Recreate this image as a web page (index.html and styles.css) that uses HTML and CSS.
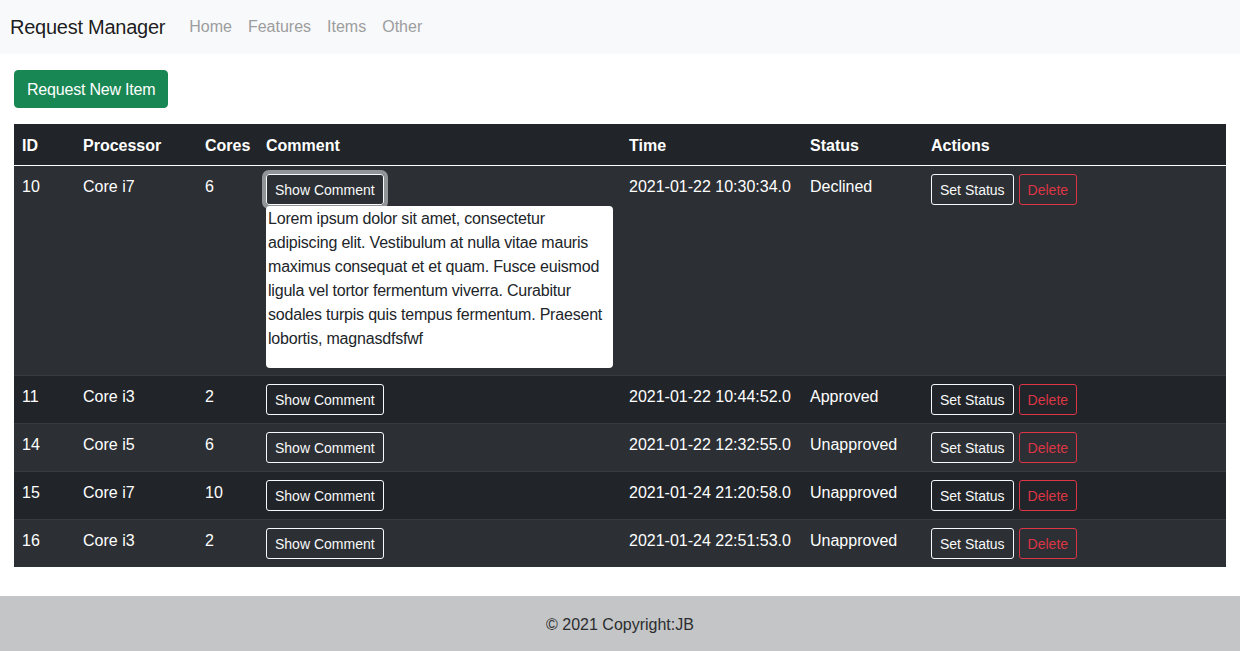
FILE: index.html
```html
<!DOCTYPE html>
<html lang="en">
<head>
<meta charset="utf-8">
<title>Request Manager</title>
<link rel="stylesheet" href="styles.css">
</head>
<body>
<nav class="navbar">
  <a class="brand" href="#">Request Manager</a>
  <ul class="nav">
    <li><a class="nav-link" href="#">Home</a></li>
    <li><a class="nav-link" href="#">Features</a></li>
    <li><a class="nav-link" href="#">Items</a></li>
    <li><a class="nav-link" href="#">Other</a></li>
  </ul>
</nav>
<main class="content">
  <button class="btn btn-success">Request New Item</button>
  <table class="table">
    <colgroup>
      <col class="c-id"><col class="c-proc"><col class="c-cores"><col class="c-comment"><col class="c-time"><col class="c-status"><col>
    </colgroup>
    <thead>
      <tr><th>ID</th><th>Processor</th><th>Cores</th><th>Comment</th><th>Time</th><th>Status</th><th>Actions</th></tr>
    </thead>
    <tbody>
      <tr class="odd">
        <td>10</td><td>Core i7</td><td>6</td>
        <td><button class="btn btn-sm btn-outline-light focus">Show Comment</button>
          <div class="comment-box"><p>Lorem ipsum dolor sit amet, consectetur adipiscing elit. Vestibulum at nulla vitae mauris maximus consequat et et quam. Fusce euismod ligula vel tortor fermentum viverra. Curabitur sodales turpis quis tempus fermentum. Praesent lobortis, magnasdfsfwf</p></div>
        </td>
        <td>2021-01-22 10:30:34.0</td><td>Declined</td>
        <td class="actions"><button class="btn btn-sm btn-outline-light">Set Status</button><button class="btn btn-sm btn-outline-danger">Delete</button></td>
      </tr>
      <tr>
        <td>11</td><td>Core i3</td><td>2</td>
        <td><button class="btn btn-sm btn-outline-light">Show Comment</button></td>
        <td>2021-01-22 10:44:52.0</td><td>Approved</td>
        <td class="actions"><button class="btn btn-sm btn-outline-light">Set Status</button><button class="btn btn-sm btn-outline-danger">Delete</button></td>
      </tr>
      <tr class="odd">
        <td>14</td><td>Core i5</td><td>6</td>
        <td><button class="btn btn-sm btn-outline-light">Show Comment</button></td>
        <td>2021-01-22 12:32:55.0</td><td>Unapproved</td>
        <td class="actions"><button class="btn btn-sm btn-outline-light">Set Status</button><button class="btn btn-sm btn-outline-danger">Delete</button></td>
      </tr>
      <tr>
        <td>15</td><td>Core i7</td><td>10</td>
        <td><button class="btn btn-sm btn-outline-light">Show Comment</button></td>
        <td>2021-01-24 21:20:58.0</td><td>Unapproved</td>
        <td class="actions"><button class="btn btn-sm btn-outline-light">Set Status</button><button class="btn btn-sm btn-outline-danger">Delete</button></td>
      </tr>
      <tr class="odd">
        <td>16</td><td>Core i3</td><td>2</td>
        <td><button class="btn btn-sm btn-outline-light">Show Comment</button></td>
        <td>2021-01-24 22:51:53.0</td><td>Unapproved</td>
        <td class="actions"><button class="btn btn-sm btn-outline-light">Set Status</button><button class="btn btn-sm btn-outline-danger">Delete</button></td>
      </tr>
    </tbody>
  </table>
</main>
<footer class="footer">© 2021 Copyright:JB</footer>
</body>
</html>
```
FILE: styles.css
```css
* { box-sizing: border-box; }
html, body { margin: 0; }
body {
  font-family: "Liberation Sans", Arial, sans-serif;
  font-size: 16px;
  line-height: 1.5;
  color: #212529;
  background: #fff;
}
.navbar {
  display: flex;
  align-items: center;
  height: 54px;
  padding: 0 10px;
  background: #f8f9fa;
}
.brand {
  font-size: 20px;
  line-height: 30px;
  letter-spacing: -0.25px;
  color: rgba(0,0,0,.9);
  text-decoration: none;
  margin-right: 16px;
}
.nav {
  display: flex;
  list-style: none;
  margin: 0;
  padding: 0;
}
.nav-link {
  display: block;
  padding: 8px;
  color: #9c9d9e;
  text-decoration: none;
}
.content {
  padding: 16px 14px 29px;
}
.btn {
  display: inline-block;
  font-family: inherit;
  font-size: 16px;
  line-height: 24px;
  padding: 6px 12px;
  border: 1px solid transparent;
  border-radius: 4px;
  background: transparent;
  cursor: pointer;
}
.btn-success {
  background: #198754;
  border-color: #198754;
  color: #fff;
  letter-spacing: -0.2px;
  padding-top: 7px;
  padding-bottom: 5px;
  margin-bottom: 16px;
}
.btn-sm {
  font-size: 14px;
  line-height: 21px;
  padding: 5px 8px 3px;
  border-radius: 3px;
}
.btn-outline-light {
  color: #f8f9fa;
  border-color: #f8f9fa;
}
.btn-outline-light.focus {
  box-shadow: 0 0 0 4px rgba(248,249,250,.5);
}
.btn-outline-danger {
  color: #dc3545;
  border-color: #dc3545;
}
.actions .btn + .btn { margin-left: 5px; }
.table {
  width: 100%;
  border-collapse: collapse;
  table-layout: fixed;
  background: #212529;
  color: #fff;
  margin: 0;
}
.c-id { width: 61px; }
.c-proc { width: 122px; }
.c-cores { width: 61px; }
.c-comment { width: 363px; }
.c-time { width: 181px; }
.c-status { width: 121px; }
.table th, .table td {
  padding: 8px;
  text-align: left;
  vertical-align: top;
}
.table th {
  font-weight: bold;
  padding-top: 10px;
  padding-bottom: 7px;
  border-bottom: 1px solid #fff;
}
.table td {
  padding-top: 9px;
  padding-bottom: 7px;
  border-bottom: 1px solid #373b3e;
}
.table td .btn-sm { margin-top: -1px; margin-bottom: 1px; }
.table tbody tr:last-child td { border-bottom: 0; }
.table tr.odd td { background: #2c3034; }
.comment-box {
  position: relative;
  width: 347px;
  background: #fff;
  color: #212529;
  border-radius: 4px;
  padding: 1px 2px 17px;
  letter-spacing: -0.2px;
}
.comment-box p { margin: 0; }
.footer {
  height: 55px;
  display: flex;
  align-items: center;
  justify-content: center;
  background: #c4c5c7;
  color: #2b2d2f;
  padding-top: 2px;
}
```
